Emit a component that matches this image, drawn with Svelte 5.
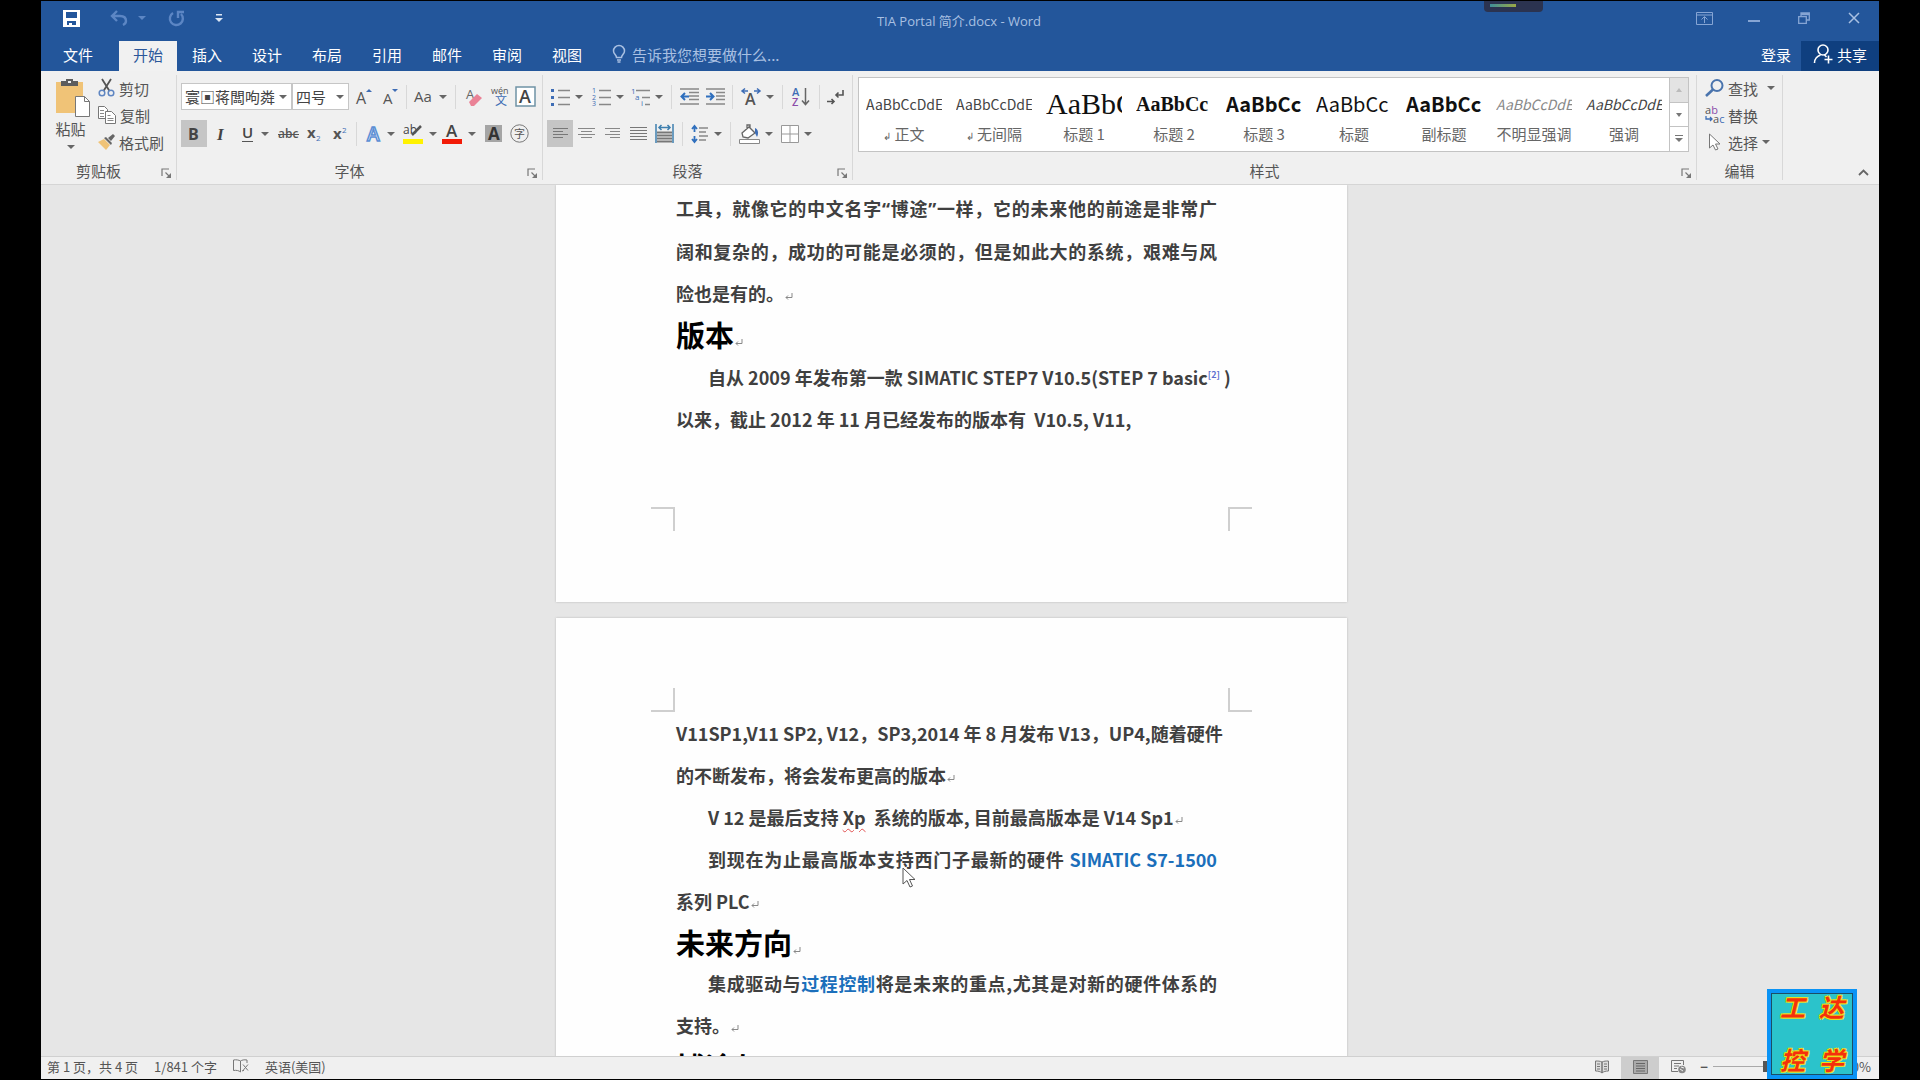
<script>
  /**
   * Word-style editor window: title bar, ribbon, two document pages, status bar.
   */

  // Each icon: [width, height, svg body]
  const ICONS = {
    save: [17, 17, '<path fill="#fff" fill-rule="evenodd" d="M0 0h17v17H0zM3 2v6h11V2zM4 11v4h2v-2h3v2h4v-4z"/>'],
    undo: [18, 16, '<path fill="none" stroke="#5c86c4" stroke-width="2.4" d="M7 1 2 6l5 5M2 6h8c4 0 6 2 6 5 0 2-1 3-3 4"/>'],
    redo: [17, 17, '<path fill="none" stroke="#5c86c4" stroke-width="2.4" d="M5 3a6.500 6.500 0 1 0 8 1M10 8V2h6"/>'],
    custom: [8, 9, '<path fill="#dce6f4" d="M1 0h6v1.500H1zM0 4h8L4 8z"/>'],
    display: [17, 13, '<path fill="none" stroke="#86a5d4" d="M.5.5h16v12H.5zM.5 3h16M8.500 11V5M5.500 7.500l3-3 3 3"/>'],
    min: [12, 12, '<path fill="#86a5d4" d="M0 8h12v2H0z"/>'],
    restore: [12, 12, '<path fill="none" stroke="#86a5d4" stroke-width="1.300" d="M.7 4.700h7.600v6.600H.7zM3 4.500V1h8.300v7H8.500M3 2.500h8"/>'],
    close: [12, 12, '<path stroke="#a9c0e2" stroke-width="1.500" d="m1 1 10 10M11 1 1 11"/>'],
    bulb: [14, 18, '<path fill="none" stroke="#a9c0e2" stroke-width="1.500" d="M4.500 12.500C4.500 10 1.500 9 1.500 6a5.500 5.500 0 0 1 11 0c0 3-3 4-3 6.500zM5 15h4M5.500 17h3"/>'],
    person: [20, 20, '<g fill="none" stroke="#fff" stroke-width="1.600"><circle cx="10" cy="6" r="5"/><path d="M1.500 19c0-4 3-7 6-8M11.500 11l2 2M15.500 11.500v8M11.500 15.500h8"/></g>'],
    paste: [35, 39, '<path fill="#f0c377" d="M1 4h27v31H1z"/><path fill="#5d5d5d" d="M6 3h5V1h7v2h5v5H6z"/><path fill="#f0f0f0" d="M13 3h3v2h-3z"/><path fill="#fff" stroke="#777" d="M20.500 18.500h9l5 5v15h-14z"/><path fill="none" stroke="#777" d="M29.500 18.500v5h5"/>'],
    cut: [17, 18, '<path stroke="#555" stroke-width="1.800" d="M4 0l7.500 12M13 0 5.500 12"/><g fill="none" stroke="#5f86c2" stroke-width="1.500"><circle cx="4" cy="14" r="2.800"/><circle cx="13" cy="14" r="2.800"/></g>'],
    copy: [18, 18, '<g fill="#fff" stroke="#777"><path d="M.5.5h6l3 3v9h-9z"/><path d="M7.500 5.500h6l4 4v8h-10z"/></g><path stroke="#888" d="M2 4.500h4M2 7.500h4M2 10.500h4M9.500 9.500h3M9.500 12.500h6M9.500 14.500h6"/>'],
    brush: [17, 16, '<path fill="#f0c377" d="m0 8 6-3 6 6-4 5z"/><path fill="#666" d="m6 4 2-1 6 6-1 2zM10 4l5-4 2 2-4 5z"/>'],
    grow: [17, 18, '<text x="1" y="16" font-size="16" fill="#555">A</text><path fill="#3e6db5" d="m11 4 3-3 3 3z"/>'],
    shrink: [17, 18, '<text x="1" y="16" font-size="15" fill="#555">A</text><path fill="#3e6db5" d="M10 1h6l-3 3z"/>'],
    aa: [20, 16, '<text x="0" y="13" font-size="15" fill="#555">Aa</text>'],
    eraser: [18, 18, '<text x="0" y="11" font-size="13" fill="#666">A</text><path fill="#ea8296" d="m3 14 8-8 5 4-8 8H5z"/>'],
    pinyin: [19, 20, '<text x="0" y="7" font-size="9" fill="#555">wén</text><text x="4" y="18" font-size="12" fill="#3e6db5">文</text>'],
    boxa: [21, 21, '<path fill="#fff" stroke="#6f93a5" stroke-width="1.500" d="M1 1h19v19H1z"/><text x="4" y="17" font-size="18" font-weight="600" fill="#444">A</text>'],
    bold: [12, 16, '<text x="0" y="14" font-size="16" font-weight="700" fill="#444">B</text>'],
    italic: [12, 16, '<text x="2" y="14" font-size="17" font-style="italic" font-weight="700" font-family="Liberation Serif, serif" fill="#444">I</text>'],
    underline: [14, 18, '<text x="0" y="13" font-size="15" font-weight="600" fill="#444">U</text><path stroke="#555" d="M0 16.500h11"/>'],
    strike: [21, 14, '<text x="0" y="11" font-size="12" font-weight="600" fill="#555">abc</text><path stroke="#555" d="M0 7.500h21"/>'],
    sub: [16, 18, '<text x="1" y="13" font-size="15" font-weight="700" fill="#555">x</text><text x="10" y="16" font-size="8" fill="#3e6db5">2</text>'],
    sup: [16, 18, '<text x="1" y="14" font-size="15" font-weight="700" fill="#555">x</text><text x="10" y="8" font-size="8" fill="#3e6db5">2</text>'],
    effect: [17, 18, '<text x="2" y="16" font-size="19" font-weight="600" fill="#fff" stroke="#5b8fd4" stroke-width="1.500">A</text>'],
    hilite: [21, 20, '<text x="0" y="10" font-size="12" fill="#444">ab</text><path stroke="#555" stroke-width="2.500" d="m18 2-9 9"/><path fill="#fff200" d="M0 15h20v5H0z"/>'],
    fontcolor: [21, 20, '<text x="4" y="13" font-size="17" font-weight="600" fill="#444">A</text><path fill="#f21b07" d="M0 15h20v5H0z"/>'],
    shade: [17, 17, '<path fill="#a5a5a5" d="M0 0h17v17H0z"/><text x="3" y="15" font-size="17" font-weight="700" fill="#333">A</text>'],
    circ: [19, 19, '<circle cx="9.500" cy="9.500" r="8.700" fill="none" stroke="#777"/><text x="4" y="14" font-size="11" fill="#555">字</text>'],
    bullets: [19, 18, '<path fill="#3e6db5" d="M0 1h3v3H0zM0 8h3v3H0zM0 15h3v3H0z"/><path stroke="#888" stroke-width="1.500" d="M7 2.500h12M7 9.500h12M7 16.500h12"/>'],
    numbers: [19, 18, '<g font-size="7" fill="#3e6db5"><text x="0" y="5">1</text><text x="0" y="12">2</text><text x="0" y="18">3</text></g><path stroke="#888" stroke-width="1.500" d="M7 2.500h12M7 9.500h12M7 16.500h12"/>'],
    levels: [19, 18, '<g font-size="8" fill="#3e6db5"><text x="0" y="6">1</text><text x="4" y="12">a</text><text x="10" y="18">i</text></g><path stroke="#888" stroke-width="1.500" d="M5 2.500h14M11 9.500h8M14 16.500h5"/>'],
    outdent: [19, 17, '<path stroke="#888" stroke-width="1.500" d="M0 1h19M9 4.500h10M9 8h10M9 11.500h10M0 16h19"/><path fill="none" stroke="#2f6fbd" stroke-width="2" d="M9 8.500H2M5 5 1.500 8.500 5 12"/>'],
    indent: [19, 17, '<path stroke="#888" stroke-width="1.500" d="M0 1h19M10 4.500h9M10 8h9M10 11.500h9M0 16h19"/><path fill="none" stroke="#2f6fbd" stroke-width="2" d="M0 8.500h7M4 5l3.500 3.500L4 12"/>'],
    asian: [20, 18, '<path fill="none" stroke="#3e6db5" stroke-width="1.500" d="M7 3H1M4 .5 1 3l3 2.500M13 3h6M16 .5 19 3l-3 2.500"/><text x="4" y="17" font-size="16" font-weight="600" fill="#555">A</text>'],
    sort: [18, 20, '<text x="0" y="9" font-size="11" font-weight="600" fill="#3e6db5">A</text><text x="0" y="19" font-size="11" font-weight="600" fill="#8a4ba8">Z</text><path fill="none" stroke="#666" stroke-width="1.500" d="M13.500 1v16M10 13.500l3.500 4 3.500-4"/>'],
    marks: [18, 16, '<path fill="none" stroke="#555" stroke-width="1.600" d="M16 1v5H9M11.500 3.500 9 6l2.500 2.500M0 12.500h7M4.500 10 7 12.500 4.500 15"/>'],
    left: [15, 13, '<path stroke="#777" stroke-width="1.200" d="M0 1.500h15M0 4.500h10M0 7.500h15M0 10.500h10"/>'],
    center: [17, 13, '<path stroke="#888" stroke-width="1.200" d="M0 1.500h17M3 4.500h11M0 7.500h17M3 10.500h11"/>'],
    right: [15, 13, '<path stroke="#888" stroke-width="1.200" d="M0 1.500h15M5 4.500h10M0 7.500h15M5 10.500h10"/>'],
    justify: [17, 14, '<path stroke="#777" stroke-width="1.200" d="M0 .5h17M0 3.500h17M0 6.500h17M0 9.500h17M0 12.500h17"/>'],
    distribute: [19, 19, '<path fill="#b5b5b5" d="M2 7h15v12H2z"/><path stroke="#777" d="M2 8.500h15M2 11.500h15M2 14.500h15M2 17.500h15"/><path fill="none" stroke="#3e7fae" stroke-width="1.500" d="M1 0v19M18 0v19M4 3.500h11M6.500 1 4 3.500 6.500 6M12.500 1 15 3.500 12.500 6"/>'],
    spacing: [18, 18, '<path fill="none" stroke="#2f6fbd" stroke-width="1.800" d="M3.500 1v6M1 4l2.500-3L6 4M3.500 11v6M1 14l2.500 3L6 14"/><path stroke="#888" stroke-width="1.500" d="M8 3h9M8 7h7M8 11h9M8 15h7"/>'],
    bucket: [21, 20, '<path fill="#fff" stroke="#666" stroke-width="1.300" d="m3 9 7-6 6 6-7 5-5-1zM8 6V1h3v3"/><path fill="#3e6db5" d="M16 4c3 1 4 5 2 9l-2-4z"/><path fill="#fff" stroke="#888" d="M.5 15.500h20v4H.5z"/>'],
    borders: [18, 18, '<path fill="#fff" stroke="#999" d="M.5.5h17v17H.5zM9 0v18M0 9h18"/>'],
    find: [19, 18, '<circle cx="12" cy="6.500" r="5.500" fill="none" stroke="#4a74ad" stroke-width="2"/><path stroke="#4a74ad" stroke-width="2.600" d="m8 10.500-7 6.500"/>'],
    replace: [19, 18, '<text x="0" y="8" font-size="11" fill="#555">a<tspan fill="#8a4ba8">b</tspan></text><text x="8" y="17" font-size="11" fill="#555">a<tspan fill="#3e6db5">c</tspan></text><path fill="none" stroke="#3e6db5" stroke-width="1.300" d="M1 10v3h6M5 11l2 2-2 2"/>'],
    pick: [12, 18, '<path fill="#fff" stroke="#777" d="M1 1v14l3.500-3 2.500 5 2.500-1L7 11h4.500z"/>'],
    launch: [11, 11, '<path fill="none" stroke="#777" stroke-width="1.200" d="M1 8V1h7M4.500 4.500 9 9"/><path fill="#777" d="M10 5v5H5z"/>'],
    more: [8, 8, '<path fill="#777" d="M0 0h8v1H0zM0 3h8L4 7z"/>'],
    up: [6, 4, '<path fill="#bbb" d="M0 4h6L3 0z"/>'],
    down: [6, 4, '<path fill="#777" d="M0 0h6L3 4z"/>'],
    chevron: [11, 7, '<path fill="none" stroke="#666" stroke-width="1.800" d="m1 6 4.500-4.500L10 6"/>'],
    proof: [16, 14, '<path fill="none" stroke="#777" d="M7.500 13V2C6 1 3 .5.5 1v10.500c2.500-.5 5.500 0 7 1.500zM7.500 2C9 1 11 .5 14 1v3M9 12c1-.5 1-.5 2-.5M10 5.500l5 6M15 5.500l-5 6"/>'],
    read: [14, 14, '<path fill="#ddd" stroke="#777" d="M7 13V2C5 1 3 1 .5 1v10c2.500 0 5 .5 6.500 2zM7 2c2-1 4-1 6.500-1v10c-2.500 0-5 .5-6.500 2z"/><path stroke="#777" d="M2 4h3M2 6.500h3M2 9h3M9 4h3M9 6.500h3M9 9h3"/>'],
    print: [15, 14, '<path fill="#aaa" stroke="#777" d="M.5.5h14v13H.5z"/><path stroke="#666" d="M3 3.500h9M3 6h9M3 8.500h9M3 11h9"/>'],
    web: [15, 14, '<path fill="none" stroke="#777" d="M12.500 5V.5H.5v11H7M3 3.500h7M3 6h5M3 8.500h3"/><circle cx="11" cy="9.500" r="3.800" fill="#888"/><path stroke="#eee" d="m9 9 3 2M10 7l3 1"/>'],
  };

  const TABS = ['开始', '插入', '设计', '布局', '引用', '邮件', '审阅', '视图'];

  // w is the slot width; entries without an icon are separators
  const FONT_ROW1 = [
    { icon: 'grow', w: 29, label: '增大字号' },
    { icon: 'shrink', w: 24, label: '减小字号' },
    { w: 8 },
    { icon: 'aa', w: 40, caret: true, label: '更改大小写' },
    { w: 10 },
    { icon: 'eraser', w: 30, label: '清除格式' },
    { icon: 'pinyin', w: 20, label: '拼音指南' },
    { icon: 'boxa', w: 30, label: '字符边框' },
  ];
  const FONT_ROW2 = [
    { icon: 'bold', w: 26, on: true, label: '加粗' },
    { icon: 'italic', w: 28, label: '倾斜' },
    { icon: 'underline', w: 40, caret: true, label: '下划线' },
    { icon: 'strike', w: 26, label: '删除线' },
    { icon: 'sub', w: 26, label: '下标' },
    { icon: 'sup', w: 26, label: '上标' },
    { w: 6 },
    { icon: 'effect', w: 42, caret: true, label: '文本效果' },
    { icon: 'hilite', w: 38, caret: true, label: '突出显示' },
    { icon: 'fontcolor', w: 40, caret: true, label: '字体颜色' },
    { icon: 'shade', w: 28, label: '字符底纹' },
    { icon: 'circ', w: 24, label: '带圈字符' },
  ];
  const PARA_ROW1 = [
    { icon: 'bullets', w: 40, caret: true, label: '项目符号' },
    { icon: 'numbers', w: 41, caret: true, label: '编号' },
    { icon: 'levels', w: 38, caret: true, label: '多级列表' },
    { w: 10 },
    { icon: 'outdent', w: 27, label: '减少缩进量' },
    { icon: 'indent', w: 25, label: '增加缩进量' },
    { w: 8 },
    { icon: 'asian', w: 42, caret: true, label: '中文版式' },
    { w: 8 },
    { icon: 'sort', w: 30, label: '排序' },
    { w: 6 },
    { icon: 'marks', w: 28, label: '显示编辑标记' },
  ];
  const PARA_ROW2 = [
    { icon: 'left', w: 26, on: true, label: '左对齐' },
    { icon: 'center', w: 26, label: '居中' },
    { icon: 'right', w: 26, label: '右对齐' },
    { icon: 'justify', w: 26, label: '两端对齐' },
    { icon: 'distribute', w: 26, label: '分散对齐' },
    { w: 10 },
    { icon: 'spacing', w: 38, caret: true, label: '行距' },
    { w: 10 },
    { icon: 'bucket', w: 42, caret: true, label: '底纹' },
    { icon: 'borders', w: 38, caret: true, label: '边框' },
  ];

  const STYLES = [
    { name: '正文', para: true, sample: 'AaBbCcDdEe', cls: 'small' },
    { name: '无间隔', para: true, sample: 'AaBbCcDdEe', cls: 'small' },
    { name: '标题 1', sample: 'AaBbCc', cls: 'h1' },
    { name: '标题 2', sample: 'AaBbCc', cls: 'h2' },
    { name: '标题 3', sample: 'AaBbCc', cls: 'h3' },
    { name: '标题', sample: 'AaBbCc', cls: 'plain' },
    { name: '副标题', sample: 'AaBbCc', cls: 'h3' },
    { name: '不明显强调', sample: 'AaBbCcDdEe', cls: 'small subtle' },
    { name: '强调', sample: 'AaBbCcDdEe', cls: 'small em' },
  ];

  let zoom = $state(100);
</script>

{#snippet icon(name)}
  {@const [w, h, body] = ICONS[name]}
  <svg class="icon" width={w} height={h} viewBox="0 0 {w} {h}" aria-hidden="true">{@html body}</svg>
{/snippet}

{#snippet caret()}
  <span class="caret"></span>
{/snippet}

{#snippet tools(list)}
  {#each list as t}
    {#if t.icon}
      <button class="tool" class:on={t.on} style="width:{t.w}px" aria-label={t.label}>
        {@render icon(t.icon)}
        {#if t.caret}{@render caret()}{/if}
      </button>
    {:else}
      <span class="sep" style="width:{t.w}px"></span>
    {/if}
  {/each}
{/snippet}

{#snippet ret()}
  <svg class="ret" width="8" height="8" viewBox="0 0 8 8" aria-hidden="true">
    <path fill="none" stroke="#888" d="M7 0v4.500H1M3 2.500l-2 2 2 2" />
  </svg>
{/snippet}

<div class="screen">
  <div class="window">
    <header class="titlebar">
      <div class="qat">
        <button class="q-save" aria-label="保存">{@render icon('save')}</button>
        <button class="q-undo" aria-label="撤消">{@render icon('undo')}<span class="caret dim"></span></button>
        <button class="q-redo" aria-label="重复">{@render icon('redo')}</button>
        <button class="q-custom" aria-label="自定义快速访问工具栏">{@render icon('custom')}</button>
      </div>
      <div class="title">TIA Portal 简介.docx - Word</div>
      <div class="winbtns">
        <button aria-label="功能区显示选项">{@render icon('display')}</button>
        <button aria-label="最小化">{@render icon('min')}</button>
        <button aria-label="还原">{@render icon('restore')}</button>
        <button aria-label="关闭">{@render icon('close')}</button>
      </div>
      <div class="recorder"><span></span></div>
    </header>

    <nav class="tabs">
      <button class="tab file">文件</button>
      {#each TABS as tab, i}
        <button class="tab" class:active={i === 0}>{tab}</button>
      {/each}
      <button class="tell">{@render icon('bulb')}告诉我您想要做什么...</button>
      <button class="login">登录</button>
      <button class="share">{@render icon('person')}共享</button>
    </nav>

    <section class="ribbon">
      <div class="group clipboard">
        <div class="body">
          <button class="paste">{@render icon('paste')}<span>粘贴</span>{@render caret()}</button>
          <div class="stack">
            <button>{@render icon('cut')}剪切</button>
            <button>{@render icon('copy')}复制</button>
            <button>{@render icon('brush')}格式刷</button>
          </div>
        </div>
        <footer>剪贴板<button class="launch" aria-label="剪贴板设置">{@render icon('launch')}</button></footer>
      </div>

      <div class="group font">
        <div class="body rows">
          <div class="row">
            <label class="combo family">
              <select aria-label="字体"><option>寰▣蒋闆呴粦</option></select>{@render caret()}
            </label>
            <label class="combo size">
              <select aria-label="字号"><option>四号</option></select>{@render caret()}
            </label>
            {@render tools(FONT_ROW1)}
          </div>
          <div class="row">{@render tools(FONT_ROW2)}</div>
        </div>
        <footer>字体<button class="launch" aria-label="字体设置">{@render icon('launch')}</button></footer>
      </div>

      <div class="group para">
        <div class="body rows">
          <div class="row">{@render tools(PARA_ROW1)}</div>
          <div class="row">{@render tools(PARA_ROW2)}</div>
        </div>
        <footer>段落<button class="launch" aria-label="段落设置">{@render icon('launch')}</button></footer>
      </div>

      <div class="group styles">
        <div class="gallery">
          {#each STYLES as s}
            <button class="style">
              <span class="sample {s.cls}">{s.sample}</span>
              <span class="name">{#if s.para}<small>↲</small>{/if}{s.name}</span>
            </button>
          {/each}
          <div class="scroll">
            <button class="off" aria-label="上一行">{@render icon('up')}</button>
            <button aria-label="下一行">{@render icon('down')}</button>
            <button aria-label="其他">{@render icon('more')}</button>
          </div>
        </div>
        <footer>样式<button class="launch" aria-label="样式窗格">{@render icon('launch')}</button></footer>
      </div>

      <div class="group editing">
        <div class="stack">
          <button>{@render icon('find')}查找<span class="caret far"></span></button>
          <button>{@render icon('replace')}替换</button>
          <button>{@render icon('pick')}选择{@render caret()}</button>
        </div>
        <footer>编辑</footer>
      </div>

      <button class="collapse" aria-label="折叠功能区">{@render icon('chevron')}</button>
    </section>

    <main class="canvas">
      <article class="page first">
        <p class="full">工具，就像它的中文名字<span class="quote">“</span>博途<span class="quote">”</span>一样，它的未来他的前途是非常广</p>
        <p class="full">阔和复杂的，成功的可能是必须的，但是如此大的系统，艰难与风</p>
        <p>险也是有的。{@render ret()}</p>
        <h1>版本{@render ret()}</h1>
        <p class="indent">自从 2009 年发布第一款 SIMATIC STEP7 V10.5(STEP 7 basic<sup><a href="#ref2">[2]</a></sup> )</p>
        <p>以来，截止 2012 年 11 月已经发布的版本有&nbsp; V10.5, V11,</p>
        <span class="mark bl"></span>
        <span class="mark br"></span>
      </article>

      <article class="page second">
        <span class="mark tl"></span>
        <span class="mark tr"></span>
        <p>V11SP1,V11 SP2, V12，SP3,2014 年 8 月发布 V13，UP4,随着硬件</p>
        <p>的不断发布，将会发布更高的版本{@render ret()}</p>
        <p class="indent">V 12 是最后支持 <span class="typo">Xp</span>&nbsp; 系统的版本, 目前最高版本是 V14 Sp1{@render ret()}</p>
        <p class="indent full">到现在为止最高版本支持西门子最新的硬件 <a href="#s7">SIMATIC S7-1500</a></p>
        <p>系列 PLC{@render ret()}</p>
        <h1>未来方向{@render ret()}</h1>
        <p class="indent full">集成驱动与<a href="#control">过程控制</a>将是未来的重点,尤其是对新的硬件体系的</p>
        <p>支持。{@render ret()}</p>
        <h1>博途与 STEP7 V5.X</h1>
        <svg class="pointer" width="14" height="21" viewBox="0 0 14 21" aria-hidden="true">
          <path fill="#fff" stroke="#555" d="M1 1v16l4-3.500 3 6.500 2.500-1-3-6.500H13z" />
        </svg>
      </article>
    </main>

    <footer class="status">
      <span>第 1 页，共 4 页</span>
      <span>1/841 个字</span>
      {@render icon('proof')}
      <span>英语(美国)</span>
      <div class="views">
        <button aria-label="阅读视图">{@render icon('read')}</button>
        <button class="on" aria-label="页面视图">{@render icon('print')}</button>
        <button aria-label="Web 版式视图">{@render icon('web')}</button>
      </div>
      <div class="zoom">
        <button aria-label="缩小">−</button>
        <input type="range" min="0" max="200" bind:value={zoom} aria-label="缩放" />
        <button aria-label="放大">+</button>
        <output>{zoom}%</output>
      </div>
    </footer>

    <div class="badge">
      <span>工</span><span>达</span><span>控</span><span>学</span>
    </div>
  </div>
</div>

<style>
  :global(body) { margin: 0; background: #000; }

  .screen {
    box-sizing: border-box;
    height: 100vh;
    padding: 1px 41px;
    background: #000;
    font-family: 'Noto Sans CJK SC', sans-serif;
    font-size: 15px;
    color: #555;
  }
  .window {
    position: relative;
    display: flex;
    flex-direction: column;
    height: 100%;
    background: #e6e6e6;
  }

  button {
    display: flex;
    align-items: center;
    justify-content: center;
    padding: 0;
    border: none;
    background: transparent;
    font: inherit;
    color: inherit;
    white-space: nowrap;
  }
  .icon {
    flex: none;
    font-family: 'Open Sans', 'Noto Sans CJK SC', sans-serif;
    overflow: visible;
  }
  .caret {
    flex: none;
    width: 0;
    border: 4px solid transparent;
    border-top-color: #666;
    border-bottom: none;
  }
  .caret.dim { border-top-color: #5c86c4; }

  /* ── Title bar ── */
  .titlebar {
    position: relative;
    display: flex;
    flex: none;
    height: 40px;
    background: #23569b;
  }
  .qat { display: flex; width: 200px; height: 34px; }
  .q-save { width: 60px; }
  .q-undo { width: 54px; gap: 10px; }
  .q-redo { width: 42px; }
  .q-custom { width: 44px; }
  .title {
    flex: 1;
    padding-left: 16px;
    text-align: center;
    line-height: 40px;
    font-family: 'Open Sans', 'Noto Sans CJK SC', sans-serif;
    font-size: 13px;
    color: #a9c0e2;
  }
  .winbtns { display: flex; width: 200px; padding-left: 18px; height: 34px; }
  .winbtns button { width: 50px; }
  .recorder {
    position: absolute;
    top: 0;
    right: 336px;
    width: 59px;
    height: 11px;
    border-radius: 0 0 4px 4px;
    background: #2b3350;
  }
  .recorder span {
    display: block;
    width: 26px;
    height: 3px;
    margin: 3px 6px;
    background: linear-gradient(90deg, #3f8f9a, #9aa845);
  }

  /* ── Tabs ── */
  .tabs {
    display: flex;
    flex: none;
    height: 30px;
    background: #23569b;
    color: #fff;
  }
  .tabs button { padding-bottom: 4px; }
  .tab { width: 60px; }
  .tab.file { width: 74px; margin-right: 4px; }
  .tab.active { width: 58px; background: #f1f1f1; color: #2b579a; }
  .tell { gap: 6px; margin-left: 15px; color: #a9c0e2; }
  .login { margin-left: auto; width: 50px; }
  .share { width: 78px; gap: 4px; background: #0f3f7f; }

  /* ── Ribbon ── */
  .ribbon {
    display: flex;
    flex: none;
    height: 113px;
    background: #f0f0f0;
    border-bottom: 1px solid #d5d5d5;
  }
  .group {
    box-sizing: border-box;
    display: flex;
    flex-direction: column;
    margin: 4px 0;
    border-right: 1px solid #d8d8d8;
  }
  .group footer {
    display: flex;
    flex: none;
    align-items: center;
    justify-content: center;
    position: relative;
    height: 20px;
    margin-top: auto;
  }
  .launch { position: absolute; right: 4px; bottom: 1px; }
  .clipboard { width: 136px; }
  .clipboard footer { padding-right: 20px; }
  .font { width: 366px; }
  .font footer { padding-right: 20px; }
  .para { width: 310px; }
  .para footer { padding-right: 20px; }
  .styles { flex: 0 1 844px; }
  .styles footer { padding-right: 20px; }
  .editing { width: 86px; }
  .body { display: flex; }
  .paste {
    flex-direction: column;
    justify-content: flex-start;
    width: 55px;
    padding: 3px 0 0 4px;
    line-height: 24px;
  }
  .paste .icon { margin-left: 4px; }
  .paste .caret { margin-top: 4px; }
  .stack { display: flex; flex-direction: column; padding-left: 8px; }
  .stack button { justify-content: flex-start; gap: 4px; height: 27px; padding-bottom: 1px; }
  .clipboard .stack { padding: 0 0 0 2px; }
  .editing .stack .icon { width: 19px; }
  .far { margin-left: 5px; }

  .rows { flex-direction: column; gap: 10px; padding: 8px 0 0 4px; }
  .row { display: flex; align-items: center; height: 27px; }
  .tool { gap: 5px; height: 27px; }
  .tool.on { background: #c5c5c5; }
  .sep {
    height: 24px;
    background: linear-gradient(#d8d8d8, #d8d8d8) center / 1px 100% no-repeat;
  }
  .combo {
    box-sizing: border-box;
    display: flex;
    align-items: center;
    height: 27px;
    padding: 0 4px 0 3px;
    border: 1px solid #c6c6c6;
    background: #fff;
  }
  .combo.family { width: 111px; }
  .combo.size { width: 57px; }
  .combo select {
    flex: 1;
    min-width: 0;
    appearance: none;
    border: none;
    padding: 0;
    background: transparent;
    font: inherit;
    font-size: 15px;
    color: #444;
  }

  .gallery {
    display: flex;
    height: 73px;
    margin: 2px 7px 0 5px;
    border: 1px solid #c3c3c3;
    background: #fff;
  }
  .style {
    flex: 1;
    flex-direction: column;
    min-width: 0;
    padding-top: 8px;
    justify-content: flex-start;
  }
  .sample {
    flex: none;
    width: 76px;
    height: 36px;
    line-height: 36px;
    overflow: hidden;
    color: #111;
    font-size: 20px;
    text-align: left;
  }
  .sample.small { font-size: 14px; color: #444; }
  .sample.h1 { font-family: 'Liberation Serif', serif; font-size: 30px; }
  .sample.h2 { font-family: 'Liberation Serif', serif; font-size: 20px; font-weight: 700; }
  .sample.h3 { font-weight: 700; }
  .sample.em { font-style: italic; }
  .sample.subtle { font-style: italic; color: #888; }
  .name { line-height: 24px; font-size: 15px; color: #666; }
  .name small { margin-right: 3px; font-size: 10px; }
  .scroll { display: flex; flex-direction: column; width: 18px; border-left: 1px solid #c3c3c3; }
  .scroll button { flex: 1; }
  .scroll button + button { border-top: 1px solid #c3c3c3; }
  .scroll .off { background: #e3e3e3; }
  .collapse { margin: auto 10px 8px auto; }

  /* ── Document ── */
  .canvas {
    flex: 1;
    min-height: 0;
    overflow: hidden;
    padding-right: 17px;
  }
  .page {
    position: relative;
    box-sizing: border-box;
    width: 791px;
    margin: 0 auto 16px;
    padding: 0 130px 0 120px;
    background: #fefefe;
    box-shadow: 0 0 2px #b5b5b5;
    font-family: 'Noto Sans CJK SC', sans-serif;
    font-size: 18px;
    font-weight: 700;
    color: #404040;
  }
  .first { height: 417px; padding-top: 2px; }
  .second { height: 900px; padding-top: 94px; }
  .page p { margin: 0; line-height: 42px; white-space: nowrap; }
  .page p.indent { padding-left: 32px; }
  .page p.full { text-align: justify; text-align-last: justify; white-space: normal; }
  .page h1 { margin: 0; line-height: 40px; font-size: 29px; color: #000; }
  .first h1 { margin-bottom: 2px; }
  .page a { color: #1b6fbb; text-decoration: none; }
  .page sup { font-size: 9px; line-height: 0; }
  .page sup a { color: #5a6fd0; }
  .quote { font-family: 'Open Sans', sans-serif; }
  .typo { text-decoration: underline wavy #e05050 1px; text-underline-offset: 3px; }
  .ret { margin-left: 1px; }

  .mark { position: absolute; box-sizing: border-box; width: 24px; height: 24px; border: 0 solid #cfcfcf; }
  .tl { left: 95px; top: 70px; border-width: 0 2px 2px 0; }
  .tr { right: 95px; top: 70px; border-width: 0 0 2px 2px; }
  .bl { left: 95px; bottom: 71px; border-width: 2px 2px 0 0; }
  .br { right: 95px; bottom: 71px; border-width: 2px 0 0 2px; }
  .pointer { position: absolute; left: 346px; top: 249px; }

  /* ── Status bar ── */
  .status {
    display: flex;
    flex: none;
    align-items: center;
    gap: 16px;
    height: 22px;
    padding: 0 8px 0 6px;
    border-top: 1px solid #d0d0d0;
    background: #f0f0f0;
    font-size: 13px;
  }
  .status > span { padding-bottom: 4px; }
  .status > .icon { margin-bottom: 4px; }
  .views { display: flex; align-self: stretch; margin-left: auto; }
  .views button { width: 38px; padding-bottom: 2px; }
  .views .on { background: #cdcdcd; }
  .zoom { display: flex; align-items: center; gap: 3px; margin-left: -15px; padding-bottom: 3px; }
  .zoom button { width: 12px; font-weight: 700; }
  .zoom input {
    appearance: none;
    width: 104px;
    height: 12px;
    margin: 0;
    background: linear-gradient(#aaa, #aaa) center / 100% 1px no-repeat;
  }
  .zoom input::-webkit-slider-thumb {
    appearance: none;
    width: 4px;
    height: 11px;
    background: #555;
  }
  .zoom output { width: 36px; text-align: right; }

  /* ── Channel badge ── */
  .badge {
    position: absolute;
    right: 22px;
    bottom: 0;
    box-sizing: border-box;
    display: grid;
    grid-template-columns: 1fr 1fr;
    align-content: space-between;
    width: 90px;
    height: 90px;
    padding: 0 2px 3px;
    border: 4px solid #0a93f5;
    outline: 1px solid #1b4d66;
    outline-offset: -5px;
    background: #2bc3cb;
    text-align: center;
    font-size: 25px;
    line-height: 26px;
    font-weight: 700;
    font-style: italic;
    color: #f5300c;
    text-shadow: 1px 1px 0 #e8e01c, -1px -1px 0 #e8e01c, 1px -1px 0 #e8e01c, -1px 1px 0 #e8e01c;
  }
</style>
